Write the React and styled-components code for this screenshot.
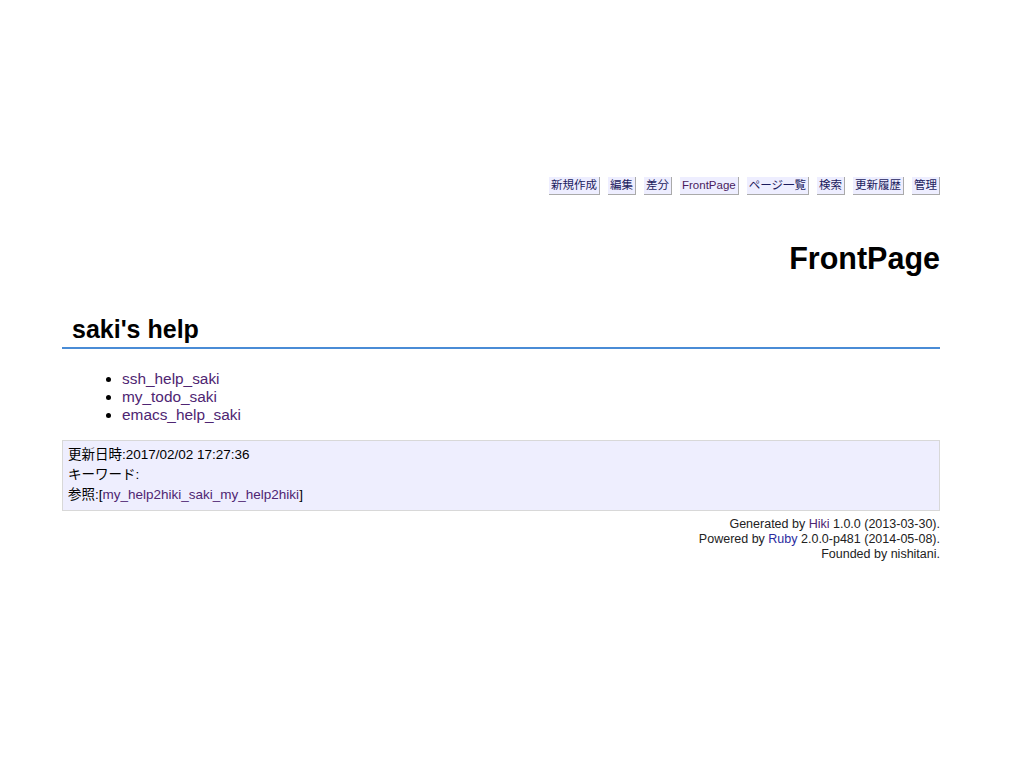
import React from "react";
import styled, { createGlobalStyle } from "styled-components";

const GlobalStyle = createGlobalStyle`
  body {
    margin: 0;
    background: #fff;
    font-family: "Liberation Sans", "Noto Sans CJK JP", sans-serif;
    color: #000;
  }
`;

const Page = styled.div`
  width: 878px;
  margin-left: 62px;
  padding-top: 177px;
`;

const Toolbar = styled.div`
  display: flex;
  justify-content: flex-end;
  gap: 8px;
`;

const ToolButton = styled.a`
  display: block;
  font-size: 11.5px;
  line-height: 17px;
  padding: 0 2px;
  background: #eeeeff;
  border-right: 1px solid #aaa;
  border-bottom: 1px solid #aaa;
  color: ${(p) => (p.$visited ? "#4a1c5e" : "#1c1c5e")};
  text-decoration: none;
`;

const Title = styled.h1`
  margin: 0;
  padding-top: 45px;
  text-align: right;
  font-size: 30.5px;
  line-height: 36px;
  font-weight: bold;
`;

const Section = styled.h2`
  margin: 0;
  margin-top: 38px;
  padding: 0 0 3px 10px;
  font-size: 25px;
  line-height: 30px;
  font-weight: bold;
  border-bottom: 2px solid #4a8cd6;
`;

const List = styled.ul`
  margin: 21px 0 0;
  padding-left: 60px;
  font-size: 15.4px;
  line-height: 18px;
`;

const Link = styled.a`
  color: ${(p) => (p.$blue ? "#2a2a9e" : "#4e2572")};
  text-decoration: none;
`;

const Info = styled.div`
  margin-top: 16px;
  padding: 4px 5px 5px;
  background: #eeeefe;
  border: 1px solid #d8d8d8;
  font-size: 13.5px;
  line-height: 20px;
`;

const Footer = styled.div`
  margin-top: 6px;
  text-align: right;
  font-size: 12.5px;
  line-height: 15px;
  color: #222;
`;

const tools = [
  ["新規作成"],
  ["編集"],
  ["差分"],
  ["FrontPage", true],
  ["ページ一覧"],
  ["検索"],
  ["更新履歴"],
  ["管理"],
];

export default function App() {
  return (
    <>
      <GlobalStyle />
      <Page>
        <Toolbar>
          {tools.map(([label, visited]) => (
            <ToolButton key={label} href="#" $visited={visited}>
              {label}
            </ToolButton>
          ))}
        </Toolbar>
        <Title>FrontPage</Title>
        <Section>saki's help</Section>
        <List>
          <li><Link href="#">ssh_help_saki</Link></li>
          <li><Link href="#">my_todo_saki</Link></li>
          <li><Link href="#">emacs_help_saki</Link></li>
        </List>
        <Info>
          <div>更新日時:2017/02/02 17:27:36</div>
          <div>キーワード:</div>
          <div>
            参照:[<Link href="#">my_help2hiki_saki_my_help2hiki</Link>]
          </div>
        </Info>
        <Footer>
          <div>Generated by <Link href="#">Hiki</Link> 1.0.0 (2013-03-30).</div>
          <div>Powered by <Link href="#" $blue>Ruby</Link> 2.0.0-p481 (2014-05-08).</div>
          <div>Founded by nishitani.</div>
        </Footer>
      </Page>
    </>
  );
}
